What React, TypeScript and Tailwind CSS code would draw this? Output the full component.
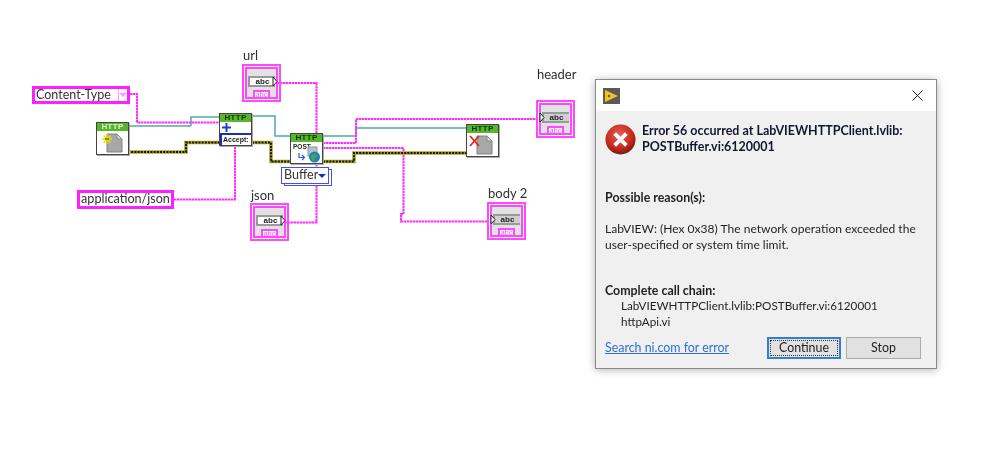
import React from "react";

const FONT = "font-['Lato',sans-serif]";

function Wires() {
  const yellow = ["M128 152H186V142.5H219", "M252 142.5H271V161.5H290", "M323 161.5H354V153H466"];
  return (
    <svg className="absolute left-0 top-0" width="595" height="475" fill="none">
      <g stroke="#4fa9a9" strokeWidth="1.5">
        <path d="M128 126H191M191 126V117H219" />
        <path d="M252 116H275V136H290" />
        <path d="M323 136H356V128H466" />
      </g>
      <g stroke="#ff2dff" strokeWidth="2" strokeDasharray="2.5 0.5">
        <path d="M130 94H137V122.5H219" />
        <path d="M174 199.5H235V146" />
        <path d="M277 83H316.5V133" />
        <path d="M323 143H356V119H536" />
        <path d="M323 148H403.5V214H401V221.5H489" />
        <path d="M316.5 164V167M316.5 186V222.5H284" />
      </g>
      {yellow.map((d) => (
        <path key={d} d={d} stroke="#aaa626" strokeWidth="3.6" />
      ))}
      {yellow.map((d) => (
        <path key={d + "k"} d={d} stroke="#15150c" strokeWidth="2" strokeDasharray="2 1.2" />
      ))}
    </svg>
  );
}

function Doc({ x }: { x?: "star" | "cross" }) {
  return (
    <svg width="31" height="24" viewBox="0 0 31 24" fill="none">
      <path d="M10 3H20L25 8V21H10Z" fill="#a8a8a8" stroke="#808080" />
      <path d="M20 3V8H25Z" fill="#dcdcdc" stroke="#8a8a8a" />
      {x === "star" && (
        <g stroke="#f0e000" strokeWidth="1.3">
          <path d="M5 8H15M10 3V13M6.5 4.5L13.5 11.5M13.5 4.5L6.5 11.5" />
          <path d="M8 8H12" stroke="#333" strokeWidth="1" />
        </g>
      )}
      {x === "cross" && <path d="M3 3L12 13M12 3L3 13" stroke="#e8231a" strokeWidth="1.8" />}
    </svg>
  );
}

function Node({
  className,
  light,
  children,
}: {
  className: string;
  light?: boolean;
  children: React.ReactNode;
}) {
  return (
    <div
      className={`absolute flex w-[33px] flex-col border border-[#444] bg-white shadow-[1px_1px_0_#aaa] ${className}`}
    >
      <div
        className={`flex h-[8px] items-center justify-center bg-[#58b62a] font-['Liberation_Sans',sans-serif] text-[8px] leading-none font-bold tracking-[0.3px] ${
          light ? "text-[#dff3cf]" : "text-[#12300a]"
        }`}
      >
        HTTP
      </div>
      <div className="relative flex-1">{children}</div>
    </div>
  );
}

function Terminal({
  label,
  side,
  className,
  labelClass,
}: {
  label: string;
  side: "in" | "out";
  className: string;
  labelClass: string;
}) {
  return (
    <div className={`absolute ${className}`}>
      <div
        className={`absolute left-[1px] text-[13px] leading-[17px] whitespace-nowrap text-[#2f2f2f] ${labelClass}`}
      >
        {label}
      </div>
      <div className="flex h-[38px] w-[39px] flex-col border-2 border-[#ff48ff] p-[1px]">
        <div className="relative flex flex-1 flex-col items-center border-2 border-[#ff48ff] bg-[#e2e2e2]">
          <div
            className={`mt-[7px] flex h-[11px] w-[27px] items-center justify-center border-y-2 border-l-2 border-[#9a9a9a] font-['Liberation_Sans',sans-serif] text-[8px] leading-none font-bold text-[#222] ${
              side === "out" ? "bg-white" : "bg-[#cfcfcf]"
            }`}
          >
            abc
          </div>
          <div className="absolute bottom-[-2px] flex h-[9px] w-[17px] items-center justify-center border-2 border-[#ff48ff] bg-white font-['Liberation_Sans',sans-serif] text-[7px] leading-none text-[#ff48ff]">
            abc
          </div>
          <svg
            className={`absolute top-[7px] ${side === "out" ? "right-[-2px]" : "left-[-2px]"}`}
            width="6"
            height="11"
          >
            <path d="M1 1L5 5.5L1 10Z" fill="#fff" stroke="#222" />
          </svg>
        </div>
      </div>
    </div>
  );
}

function Diagram() {
  return (
    <div className="relative h-[475px] w-[595px] shrink-0">
      <Wires />
      <div className="absolute left-[32px] top-[86px] flex h-[18px] w-[98px] items-center border-[3px] border-[#ff1fff] bg-white text-[12.5px] text-[#333]">
        <span className="w-[83px] pl-[1px] leading-none whitespace-nowrap">Content-Type</span>
        <div className="flex h-full flex-1 items-center justify-center border-l border-[#ff9cff]">
          <div className="h-0 w-0 border-x-[4px] border-t-[4px] border-x-transparent border-t-[#ff9cff]" />
        </div>
      </div>
      <div className="absolute left-[77px] top-[190px] flex h-[19px] w-[97px] items-center justify-center border-[3px] border-[#ff1fff] bg-white text-[12.6px] leading-none whitespace-nowrap text-[#333]">
        application/json
      </div>

      <Node light className="left-[96px] top-[122px] h-[33px]">
        <Doc x="star" />
      </Node>
      <Node className="left-[219px] top-[113px] h-[33px]">
        <svg className="ml-[2px] mt-[1px] block" width="9" height="9" fill="none" stroke="#1a3fd0" strokeWidth="2">
          <path d="M0 4.5H9M4.5 0V9" />
        </svg>
        <div className="mt-[1px] h-[12px] border-t-2 border-l-2 border-[#1d2fb0] pl-[1px]">
          <div className="font-['Liberation_Sans',sans-serif] text-[7px] leading-[9px] font-bold whitespace-nowrap text-[#222]">
            Accept:
          </div>
        </div>
      </Node>
      <Node className="left-[290px] top-[133px] h-[31px]">
        <div className="absolute left-[2px] top-0 font-['Liberation_Sans',sans-serif] text-[6.5px] leading-[9px] font-bold text-[#222]">
          POST
        </div>
        <svg className="absolute left-0 top-0" width="31" height="22" fill="none">
          <path d="M8 11V15.5H13M11 13L13.5 15.5L11 18" stroke="#2a63d8" strokeWidth="1.2" />
          <rect x="17" y="5" width="9" height="9" fill="#b4c0cc" stroke="#8a97a5" />
          <circle cx="23.5" cy="15" r="5.5" fill="#1f7fb8" />
          <path d="M20 13L24 11L27 14L24 16L23 20L20 17Z" fill="#3fa35a" />
        </svg>
      </Node>
      <Node className="left-[466px] top-[124px] h-[33px]">
        <Doc x="cross" />
      </Node>

      <div className="absolute left-[281px] top-[167px] h-[19px] w-[51px]">
        <div className="absolute left-[3px] top-[2px] h-[17px] w-[48px] border border-[#3f52ee] bg-white" />
        <div className="absolute left-0 top-0 flex h-[17px] w-[48px] items-center justify-between border border-[#3f52ee] bg-white pl-[2px] pr-[3px] text-[12.5px] leading-none text-[#333]">
          Buffer
          <div className="h-0 w-0 border-x-[4px] border-t-[4px] border-x-transparent border-t-[#1a2fc0]" />
        </div>
      </div>

      <Terminal label="url" side="out" labelClass="top-[-17px]" className="left-[242px] top-[64px]" />
      <Terminal label="header" side="in" labelClass="top-[-34px]" className="left-[536px] top-[100px]" />
      <Terminal label="json" side="out" labelClass="top-[-16px]" className="left-[250px] top-[203px]" />
      <Terminal label="body 2" side="in" labelClass="top-[-17px]" className="left-[487px] top-[202px]" />
    </div>
  );
}

function ErrorIcon() {
  return (
    <svg width="31" height="31" viewBox="0 0 32 32">
      <defs>
        <radialGradient id="r" cx="45%" cy="35%" r="70%">
          <stop offset="0" stopColor="#e9604f" />
          <stop offset="0.65" stopColor="#c3281c" />
          <stop offset="1" stopColor="#6e120c" />
        </radialGradient>
      </defs>
      <circle cx="16" cy="16" r="15.5" fill="url(#r)" />
      <path d="M10 10L22 22M22 10L10 22" stroke="#fff" strokeWidth="4" />
    </svg>
  );
}

function Dialog() {
  return (
    <div className="mt-[79px] flex h-[290px] w-[342px] shrink-0 flex-col self-start border border-[#8a8a8a] bg-[#f0f0f0] text-[12px] leading-[16px] text-[#1f1f1f] shadow-[0_1px_8px_rgba(0,0,0,0.3)]">
      <div className="flex h-[31px] shrink-0 items-center justify-between bg-white pl-[7px] pr-[13px]">
        <svg width="17" height="16" viewBox="0 0 17 16">
          <rect width="17" height="16" fill="#5a5a5a" />
          <path d="M2 2L15 8L2 14Z" fill="#f6c21c" />
          <circle cx="6" cy="8" r="1.2" fill="#5a5a5a" />
        </svg>
        <svg width="11" height="11" viewBox="0 0 11 11" stroke="#222" fill="none">
          <path d="M0.5 0.5L10.5 10.5M10.5 0.5L0.5 10.5" />
        </svg>
      </div>
      <div className="flex flex-1 flex-col pl-[9px] pr-[15px]">
        <div className="mt-[12px] flex items-center gap-[6px]">
          <ErrorIcon />
          <div className="text-[12.5px] font-bold whitespace-nowrap text-[#101830]">
            Error 56 occurred at LabVIEWHTTPClient.lvlib:
            <br />
            POSTBuffer.vi:6120001
          </div>
        </div>
        <div className="mt-[35px] text-[12.4px] font-bold">Possible reason(s):</div>
        <div className="mt-[15px] text-[12.05px] whitespace-nowrap">
          LabVIEW: (Hex 0x38) The network operation exceeded the
          <br />
          user-specified or system time limit.
        </div>
        <div className="mt-[30px] text-[12.4px] font-bold">Complete call chain:</div>
        <div className="mt-[-2px] pl-[16px] text-[11.7px]">
          LabVIEWHTTPClient.lvlib:POSTBuffer.vi:6120001
          <br />
          httpApi.vi
        </div>
        <div className="mt-[8px] flex items-center gap-[5px] text-[12.4px]">
          <span className="flex-1 text-[#2f6fd6] underline">Search ni.com for error</span>
          <div className="flex h-[22px] w-[74px] items-center justify-center border-2 border-[#2f80d0] bg-[#e1e1e1]">
            <div className="flex h-[16px] w-[68px] items-center justify-center border border-dotted border-[#333]">
              Continue
            </div>
          </div>
          <div className="flex h-[22px] w-[75px] items-center justify-center border border-[#adadad] bg-[#e1e1e1]">
            Stop
          </div>
        </div>
      </div>
    </div>
  );
}

export default function App() {
  return (
    <div className={`flex h-[475px] w-[998px] overflow-hidden bg-white blur-[0.35px] ${FONT}`}>
      <Diagram />
      <Dialog />
    </div>
  );
}
